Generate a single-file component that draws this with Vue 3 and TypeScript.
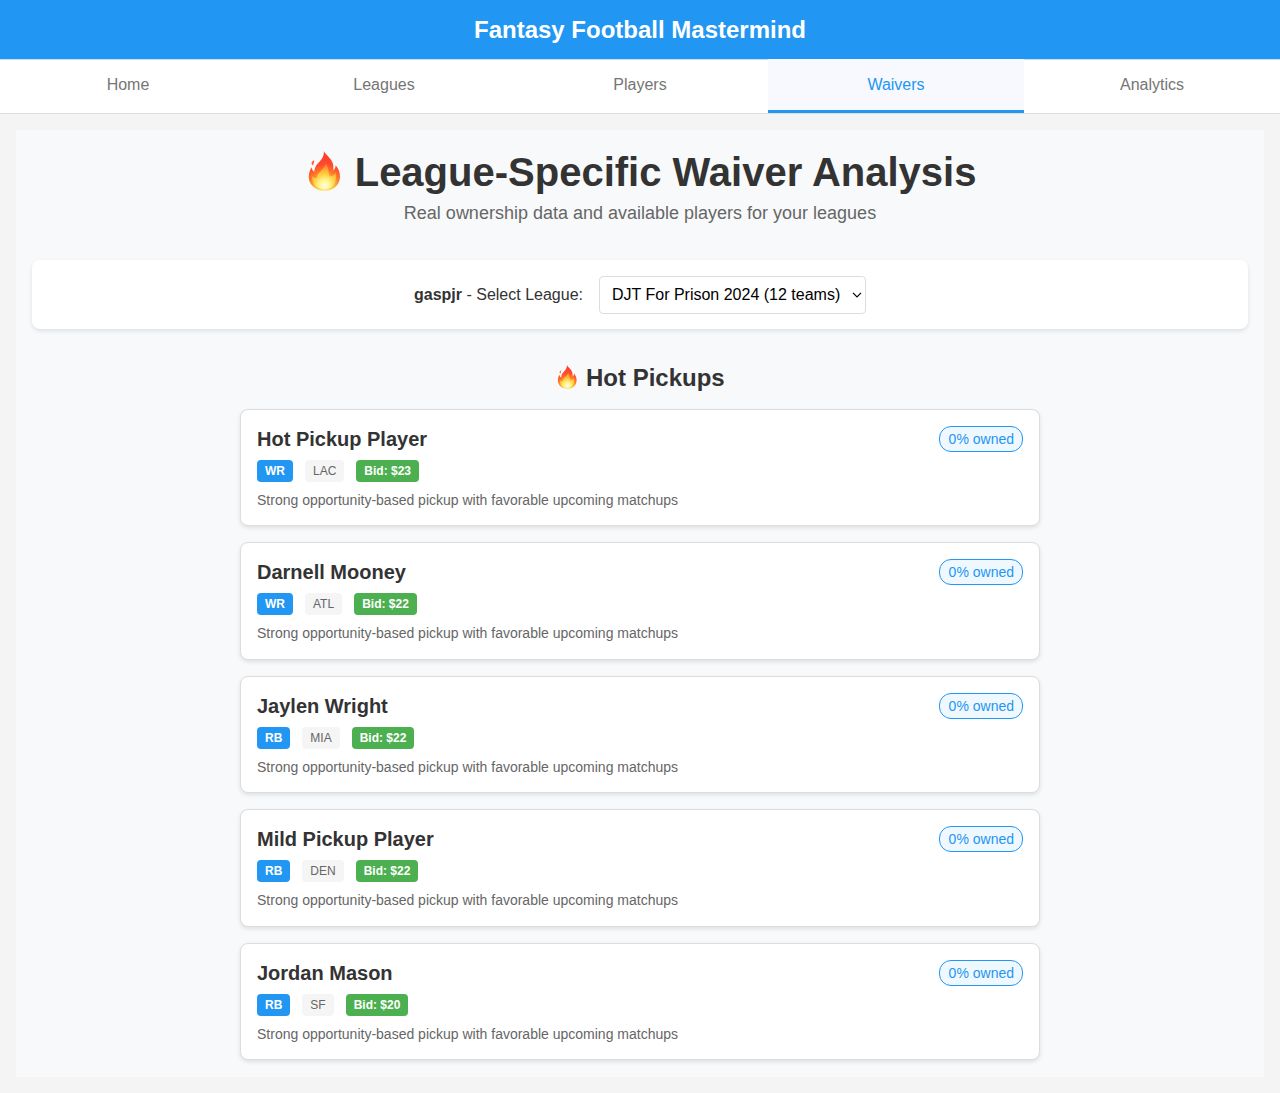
<script setup lang="ts">
interface Player { name: string; pos: string; team: string; bid: number }
const tabs: string[] = ['Home', 'Leagues', 'Players', 'Waivers', 'Analytics']
const players: Player[] = [
  { name: 'Hot Pickup Player', pos: 'WR', team: 'LAC', bid: 23 },
  { name: 'Darnell Mooney', pos: 'WR', team: 'ATL', bid: 22 },
  { name: 'Jaylen Wright', pos: 'RB', team: 'MIA', bid: 22 },
  { name: 'Mild Pickup Player', pos: 'RB', team: 'DEN', bid: 22 },
  { name: 'Jordan Mason', pos: 'RB', team: 'SF', bid: 20 },
]
</script>

<template>
  <div class="app">
    <svg width="0" height="0" class="defs" aria-hidden="true">
      <defs>
        <radialGradient id="flameOuter" gradientUnits="userSpaceOnUse" cx="19.5" cy="36" r="34">
          <stop offset="0" stop-color="#fff07a" />
          <stop offset=".25" stop-color="#ffc23a" />
          <stop offset=".45" stop-color="#ff7a2a" />
          <stop offset=".65" stop-color="#ff4a2c" />
          <stop offset="1" stop-color="#fa3c2a" />
        </radialGradient>
        <radialGradient id="flameInner" gradientUnits="userSpaceOnUse" cx="19.5" cy="35" r="22">
          <stop offset="0" stop-color="#fffee6" />
          <stop offset=".25" stop-color="#fff48a" />
          <stop offset=".55" stop-color="#ffc93a" />
          <stop offset="1" stop-color="#ff8a30" stop-opacity=".7" />
        </radialGradient>
        <symbol id="flame" viewBox="-1.200 .6 40 40">
          <path fill="url(#flameOuter)" d="M18.600 .4C20 4.200 25.800 7.500 27.500 12.500C28.400 15.200 28 18 28.300 20C29.800 18.700 30.300 16.800 30.500 14.800C33 17.800 34.800 21.500 34.800 26C34.800 34.500 28 40.200 19.500 40.200C10.500 40.200 3.600 34.500 3.600 26.500C3.600 22.500 4.800 19.200 6.400 16.800C6.800 19 7.600 20.500 9 21.300C9.400 17.500 10.600 14.800 13.600 12C17.300 8.400 19.200 4.500 18.600 .4Z" />
          <path fill="#ff5a42" d="M9 9.800C9.300 12 8.200 12.700 7.900 15C5.600 13.300 5.900 11.300 9 9.800Z" />
          <path fill="url(#flameInner)" d="M20.500 13C23.800 17 22.800 21 24.600 26C27.500 25.800 29.300 24 30.400 22C32.500 31 27.500 39.200 19.500 39.200C11.500 39.200 6.300 33 6.900 25.500C8.200 27.300 9.800 28 11.600 27.500C11.800 22 19.300 19 20.500 13Z" />
        </symbol>
      </defs>
    </svg>
    <header class="top"><h1>Fantasy Football Mastermind</h1></header>
    <nav class="nav">
      <button v-for="t in tabs" :key="t" :class="{ active: t === 'Waivers' }">{{ t }}</button>
    </nav>
    <main class="main">
      <div class="head">
        <h1><svg class="fire"><use href="#flame" /></svg> League-Specific Waiver Analysis</h1>
        <p>Real ownership data and available players for your leagues</p>
      </div>
      <div class="selector">
        <label for="league"><strong>gaspjr</strong> - Select League:</label>
        <div class="picker">
          <select id="league"><option>DJT For Prison 2024 (12 teams)</option></select>
          <svg class="chevron" viewBox="0 0 10 6"><path d="M1 .8L5 4.800L9 .8" fill="none" stroke="#000" stroke-width="1.200" /></svg>
        </div>
      </div>
      <h2><svg class="fire"><use href="#flame" /></svg> Hot Pickups</h2>
      <div class="list">
        <article v-for="p in players" :key="p.name" class="card">
          <div class="row">
            <h3>{{ p.name }}</h3>
            <span class="owned">0% owned</span>
          </div>
          <div class="tags">
            <span class="pos">{{ p.pos }}</span>
            <span class="team">{{ p.team }}</span>
            <span class="bid">Bid: ${{ p.bid }}</span>
          </div>
          <p>Strong opportunity-based pickup with favorable upcoming matchups</p>
        </article>
      </div>
    </main>
  </div>
</template>

<style>
body { background: #f4f4f4; }
</style>
<style scoped>
* { box-sizing: border-box; }
h1, h2, h3, p { margin: 0; }
.defs { position: absolute; }
.app { font-family: "Liberation Sans", Arial, sans-serif; color: #333; min-height: 1093px; background: #f4f4f4; }
.top { background: #2196f3; color: #fff; text-align: center; padding: 16px; height: 59px; }
.top h1 { font-size: 24px; line-height: 27px; }
.nav { display: flex; background: #fff; border-bottom: 1px solid #ddd; height: 55px; box-shadow: inset 0 1px #bfe0fb; }
.nav button { flex: 1; border: 0; border-bottom: 3px solid transparent; background: none; font: 16px "Liberation Sans", Arial, sans-serif; color: #757575; padding: 0; }
.nav button.active { color: #2196f3; border-bottom-color: #2196f3; background: #f8f9ff; }
.main { margin: 16px 16px 0; padding: 16px; background: #f8f9fb; height: 947px; }
.head { text-align: center; margin-bottom: 37px; }
.head h1 { font-size: 40px; line-height: 46px; padding-top: 3px; margin-bottom: 8px; }
.head p { font-size: 18px; line-height: 20px; color: #666; }
.fire { width: 1em; height: 1em; vertical-align: -.125em; overflow: visible; }
.selector { height: 69.4px; background: #fff; border-radius: 8px; box-shadow: 0 2px 4px rgba(0,0,0,.1); display: flex; align-items: center; justify-content: center; gap: 16px; font-size: 16px; }
.selector label { line-height: 18px; padding-top: 1px; }
.picker { position: relative; height: 38px; }
.picker select { display: block; appearance: none; font: 16px "Liberation Sans", Arial, sans-serif; padding: 8px 12px; border: 1px solid #ddd; border-radius: 4px; background: #fff; color: #000; height: 38px; width: 267px; }
.chevron { position: absolute; right: 4px; top: 16.500px; width: 10px; height: 6px; pointer-events: none; }
h2 { text-align: center; font-size: 24px; line-height: 27px; margin: 34.6px 0 18px; }
.list { width: 800px; margin: 0 auto; display: flex; flex-direction: column; gap: 16.07px; }
.card { background: #fff; border: 1px solid #ddd; border-radius: 8px; padding: 16px; height: 117.4px; box-shadow: 0 2px 4px rgba(0,0,0,.1); }
.row { display: flex; justify-content: space-between; align-items: center; height: 26px; margin-bottom: 8px; }
.row h3 { font-size: 20px; padding-top: .8px; }
.owned { font-size: 14px; color: #2196f3; background: #f0f8ff; border: 1px solid #2196f3; border-radius: 12px; padding: 4px 8px 4px 8.5px; line-height: 16px; height: 26px; }
.tags { display: flex; gap: 12px; font-size: 12px; line-height: 14px; margin-bottom: 10px; }
.tags span { padding: 4px 8px; border-radius: 4px; }
.pos { background: #2196f3; color: #fff; font-weight: bold; }
.team { background: #f5f5f5; color: #666; }
.bid { background: #4caf50; color: #fff; font-weight: bold; }
.card p { font-size: 14px; line-height: 16px; color: #666; }
</style>
